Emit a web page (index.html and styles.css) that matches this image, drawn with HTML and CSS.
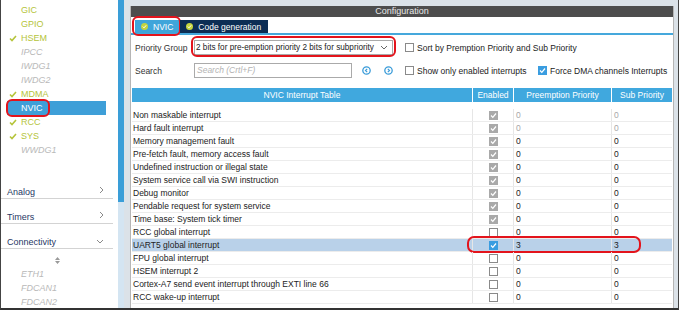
FILE: index.html
```html
<!DOCTYPE html>
<html lang="en">
<head>
<meta charset="UTF-8">
<title>NVIC Configuration</title>
<link rel="stylesheet" href="styles.css">
</head>
<body>

<div class="app">
    <aside class="side">
        <ul class="periph">
            <li>GIC</li>
            <li>GPIO</li>
            <li class="ok"><svg class="tick" width="8" height="7" viewBox="0 0 8 7"><path d="M1 3.5 L3 5.5 L7 1" /></svg>HSEM</li>
            <li class="off">IPCC</li>
            <li class="off">IWDG1</li>
            <li class="off">IWDG2</li>
            <li class="ok"><svg class="tick" width="8" height="7" viewBox="0 0 8 7"><path d="M1 3.5 L3 5.5 L7 1" /></svg>MDMA</li>
            <li class="sel">NVIC<span class="ring"></span></li>
            <li class="ok"><svg class="tick" width="8" height="7" viewBox="0 0 8 7"><path d="M1 3.5 L3 5.5 L7 1" /></svg>RCC</li>
            <li class="ok"><svg class="tick" width="8" height="7" viewBox="0 0 8 7"><path d="M1 3.5 L3 5.5 L7 1" /></svg>SYS</li>
            <li class="off">WWDG1</li>
        </ul>

        <div class="cat first">Analog <svg width="5" height="8" viewBox="0 0 5 8"><path d="M1 1 L4 4 L1 7" /></svg></div>
        <div class="cat">Timers <svg width="5" height="8" viewBox="0 0 5 8"><path d="M1 1 L4 4 L1 7" /></svg></div>
        <div class="cat">Connectivity <svg width="8" height="5" viewBox="0 0 8 5"><path d="M1 1 L4 4 L7 1" /></svg></div>

        <div class="sorter">
            <svg width="5" height="7" viewBox="0 0 5 7"><path d="M2.5 0 L5 3 L0 3 Z M0 4 L5 4 L2.5 7 Z" /></svg>
        </div>
        <ul class="sub">
            <li>ETH1</li>
            <li>FDCAN1</li>
            <li>FDCAN2</li>
        </ul>
    </aside>

    <div class="sbar"><div class="thumb"></div></div>

    <main class="main">
        <section class="panel">
            <div class="cfg-head">Configuration</div>

            <div class="tabs">
                <div class="tab active">
                    <svg class="dot" width="7" height="7" viewBox="0 0 7 7"><circle cx="3.5" cy="3.5" r="3.5" /><path d="M1.8 3.6 L3 4.8 L5.2 2.3" /></svg>
                    NVIC
                    <span class="ring"></span>
                </div>
                <div class="tab dark">
                    <svg class="dot" width="7" height="7" viewBox="0 0 7 7"><circle cx="3.5" cy="3.5" r="3.5" /><path d="M1.8 3.6 L3 4.8 L5.2 2.3" /></svg>
                    Code generation
                </div>
            </div>

            <div class="form">
                <div class="row">
                    <span class="lbl">Priority Group</span>
                    <div class="select">
                        <span>2 bits for pre-emption priority 2 bits for subpriority</span>
                        <svg width="8" height="5" viewBox="0 0 8 5"><path d="M1 1 L4 4 L7 1" /></svg>
                        <span class="ring"></span>
                    </div>
                    <label class="opt"><span class="cb"></span>Sort by Premption Priority and Sub Priority</label>
                </div>
                <div class="row">
                    <span class="lbl">Search</span>
                    <div class="search">Search (Crtl+F)</div>
                    <svg class="nav first" width="9" height="9" viewBox="0 0 9 9"><circle cx="4.5" cy="4.5" r="3.7" /><path d="M5.2 2.8 L3.5 4.5 L5.2 6.2" /></svg>
                    <svg class="nav" width="9" height="9" viewBox="0 0 9 9"><circle cx="4.5" cy="4.5" r="3.7" /><path d="M3.8 2.8 L5.5 4.5 L3.8 6.2" /></svg>
                    <label class="opt wide"><span class="cb"></span>Show only enabled interrupts</label>
                    <label class="opt"><span class="cb on"><svg width="7" height="7" viewBox="0 0 7 7"><path d="M1 3.5 L2.8 5.3 L6 1.5" /></svg></span>Force DMA channels Interrupts</label>
                </div>
            </div>

            <div class="tbl">
                <div class="thead">
                    <div>NVIC Interrupt Table</div>
                    <div>Enabled</div>
                    <div>Preemption Priority</div>
                    <div>Sub Priority</div>
                </div>
                <div class="tbody" id="rows"></div>
            </div>
        </section>
    </main>
</div>

<script>
    // rows of the interrupt table: name, enabled state, preemption, sub priority
    const interrupts = [
        ["Non maskable interrupt", "dis", "0", "0", "faint"],
        ["Hard fault interrupt", "dis", "0", "0", "faint"],
        ["Memory management fault", "dis", "0", "0"],
        ["Pre-fetch fault, memory access fault", "dis", "0", "0"],
        ["Undefined instruction or illegal state", "dis", "0", "0"],
        ["System service call via SWI instruction", "dis", "0", "0"],
        ["Debug monitor", "dis", "0", "0"],
        ["Pendable request for system service", "dis", "0", "0"],
        ["Time base: System tick timer", "dis", "0", "0"],
        ["RCC global interrupt", "off", "0", "0"],
        ["UART5 global interrupt", "on", "3", "3", "sel"],
        ["FPU global interrupt", "off", "0", "0"],
        ["HSEM interrupt 2", "off", "0", "0"],
        ["Cortex-A7 send event interrupt through EXTI line 66", "off", "0", "0"],
        ["RCC wake-up interrupt", "off", "0", "0"]
    ];

    const tick = '<svg width="7" height="7" viewBox="0 0 7 7"><path d="M1 3.5 L2.8 5.3 L6 1.5" /></svg>';
    let html = '';
    for (let i = 0; i < interrupts.length; i++) {
        const [name, state, pre, sub, flag] = interrupts[i];
        const box = state === 'off' ? '' : tick;
        html += '<div class="tr ' + (flag || '') + '">' +
            '<div>' + name + '</div>' +
            '<div class="en"><span class="cb ' + state + '">' + box + '</span></div>' +
            '<div class="num">' + pre + '</div>' +
            '<div class="num">' + sub + '</div>' +
            (flag === 'sel' ? '<span class="ring"></span>' : '') +
            '</div>';
    }
    document.getElementById('rows').innerHTML = html;
</script>

</body>
</html>
```

FILE: styles.css
```css
body {
    margin: 0;
    font-family: "Liberation Sans", Arial, sans-serif;
    font-size: 8.5px;
    color: #222;
}

.app {
    display: flex;
    width: 679px;
    height: 310px;
    box-sizing: border-box;
    border-left: 1px solid #444;
    border-right: 1px solid #444;
    border-bottom: 2px solid #333;
    overflow: hidden;
    background: #fff;
}

/* left peripheral list */
.side {
    width: 117px;
    flex-shrink: 0;
    background: #fff;
}

.periph {
    list-style: none;
    margin: 0;
    padding: 3px 0 0 0;
}

.periph li {
    position: relative;
    height: 14px;
    line-height: 14px;
    width: 99px;
    margin-left: 6px;
    padding-left: 14px;
    box-sizing: border-box;
    font-size: 9px;
    color: #b5c43a;
}

.periph li.off {
    color: #b9b9b9;
    font-style: italic;
}

.periph li.sel {
    background: #3e9fd8;
    color: #fff;
}

.tick {
    position: absolute;
    left: 2px;
    top: 4px;
}

.tick path {
    fill: none;
    stroke: #b5c43a;
    stroke-width: 1.6;
}

.ring {
    position: absolute;
    border: 2px solid #e3141c;
    border-radius: 6px;
    pointer-events: none;
}

.periph li .ring {
    left: -1px;
    top: -2px;
    width: 40px;
    height: 14px;
}

.cat {
    display: flex;
    justify-content: space-between;
    align-items: flex-end;
    width: 112px;
    height: 25px;
    box-sizing: border-box;
    padding: 0 9px 0 6px;
    border-bottom: 1px solid #d3d3d3;
    color: #1f3764;
    font-size: 9px;
    line-height: 12px;
}

.cat.first {
    margin-top: 17px;
}

.cat svg {
    margin-bottom: 4px;
}

.cat path {
    fill: none;
    stroke: #8a8a8a;
    stroke-width: 1;
}

.sorter {
    width: 112px;
    height: 18px;
    box-sizing: border-box;
    padding-top: 8px;
    text-align: center;
    line-height: 0;
}

.sorter path {
    fill: #9a9a9a;
}

.sub {
    list-style: none;
    margin: 0;
    padding: 0;
}

.sub li {
    height: 14px;
    line-height: 14px;
    padding-left: 20px;
    font-size: 9px;
    font-style: italic;
    color: #b9b9b9;
}

/* scrollbar of the list */
.sbar {
    width: 6px;
    flex-shrink: 0;
    background: #d4e5f2;
}

.thumb {
    height: 202px;
    background: #3a9ed8;
}

/* configuration panel */
.main {
    flex: 1;
    background: #dbe2e8;
    padding: 6px 4px 0 6px;
}

.panel {
    height: 100%;
    background: #fff;
    border-left: 1px solid #b5b5b5;
    border-right: 1px solid #b5b5b5;
}

.cfg-head {
    height: 11px;
    line-height: 11px;
    background: #4d4d4d;
    color: #e8e8e8;
    text-align: center;
    font-size: 9px;
}

.tabs {
    display: flex;
    align-items: flex-end;
    height: 16px;
    padding-left: 4px;
    border-bottom: 2px solid #45a8dc;
}

.tab {
    position: relative;
    display: flex;
    align-items: center;
    gap: 5px;
    height: 13px;
    padding: 0 7px 0 6px;
    color: #fff;
}

.tab.active {
    background: #3fa5da;
}

.tab.dark {
    background: #0c2d54;
}

.dot circle {
    fill: #c5d43e;
}

.dot path {
    fill: none;
    stroke: #fff;
    stroke-width: 1;
}

.tab .ring {
    left: -3px;
    top: -4px;
    right: -1px;
    bottom: -3px;
}

.form {
    padding: 5px 0 0 4px;
}

.row {
    display: flex;
    align-items: center;
    height: 15px;
}

.row + .row {
    margin-top: 8px;
}

.lbl {
    width: 59px;
    color: #333;
}

.select {
    position: relative;
    display: flex;
    align-items: center;
    justify-content: space-between;
    width: 199px;
    height: 15px;
    box-sizing: border-box;
    padding: 0 4px 0 1px;
    border: 1px solid #aaa;
    color: #222;
    font-size: 8.2px;
}

.select svg path {
    fill: none;
    stroke: #666;
    stroke-width: 1;
}

.select .ring {
    left: -4px;
    top: -5px;
    right: -4px;
    bottom: -3px;
}

.search {
    width: 158px;
    height: 15px;
    line-height: 13px;
    box-sizing: border-box;
    padding-left: 2px;
    border: 1px solid #aaa;
    color: #b3b3b3;
    font-style: italic;
}

.nav {
    margin-left: 13px;
}

.nav.first {
    margin-left: 10px;
}

.nav circle {
    fill: none;
    stroke: #3b9cd9;
    stroke-width: 1.3;
}

.nav path {
    fill: none;
    stroke: #3b9cd9;
    stroke-width: 1.2;
}

.opt {
    display: flex;
    align-items: center;
    margin-left: 12px;
    color: #222;
}

.opt.wide {
    width: 133px;
}

.opt .cb {
    margin-right: 3px;
}

.opt.wide + .opt {
    margin-left: 0;
}

.cb {
    display: inline-flex;
    align-items: center;
    justify-content: center;
    width: 9px;
    height: 9px;
    box-sizing: border-box;
    border: 1px solid #8a8a8a;
    background: #fff;
}

.cb svg path {
    fill: none;
    stroke: #fff;
    stroke-width: 1.2;
}

.cb.on {
    border-color: #3a9de0;
    background: #3a9de0;
}

.cb.dis {
    border-color: #a9a9a9;
    background: #a9a9a9;
}

/* interrupt table */
.tbl {
    width: 540px;
    margin: 10px 0 0 1px;
}

.thead,
.tr {
    display: grid;
    grid-template-columns: 340px 41px 98px 61px;
}

.thead {
    height: 14px;
    line-height: 14px;
    background: #40a8de;
    color: #fff;
    text-align: center;
}

.thead div + div {
    border-left: 1px solid #fff;
}

.tbody {
    padding-top: 7px;
}

.tr {
    position: relative;
    height: 13px;
    line-height: 12px;
    box-sizing: border-box;
    border-bottom: 1px solid #ececec;
}

.tr div {
    padding-left: 1px;
    white-space: nowrap;
}

.tr div + div {
    border-left: 1px solid #e6e6e6;
}

.tr .en {
    display: flex;
    align-items: center;
    justify-content: center;
    padding-left: 0;
}

.tr .num {
    padding-left: 2px;
}

.tr.faint .num {
    color: #a8a8a8;
}

.tr.sel {
    background: #b9d1e9;
}

.tr .ring {
    left: 335px;
    top: -3px;
    width: 170px;
    height: 13px;
    border-radius: 7px;
}
```
